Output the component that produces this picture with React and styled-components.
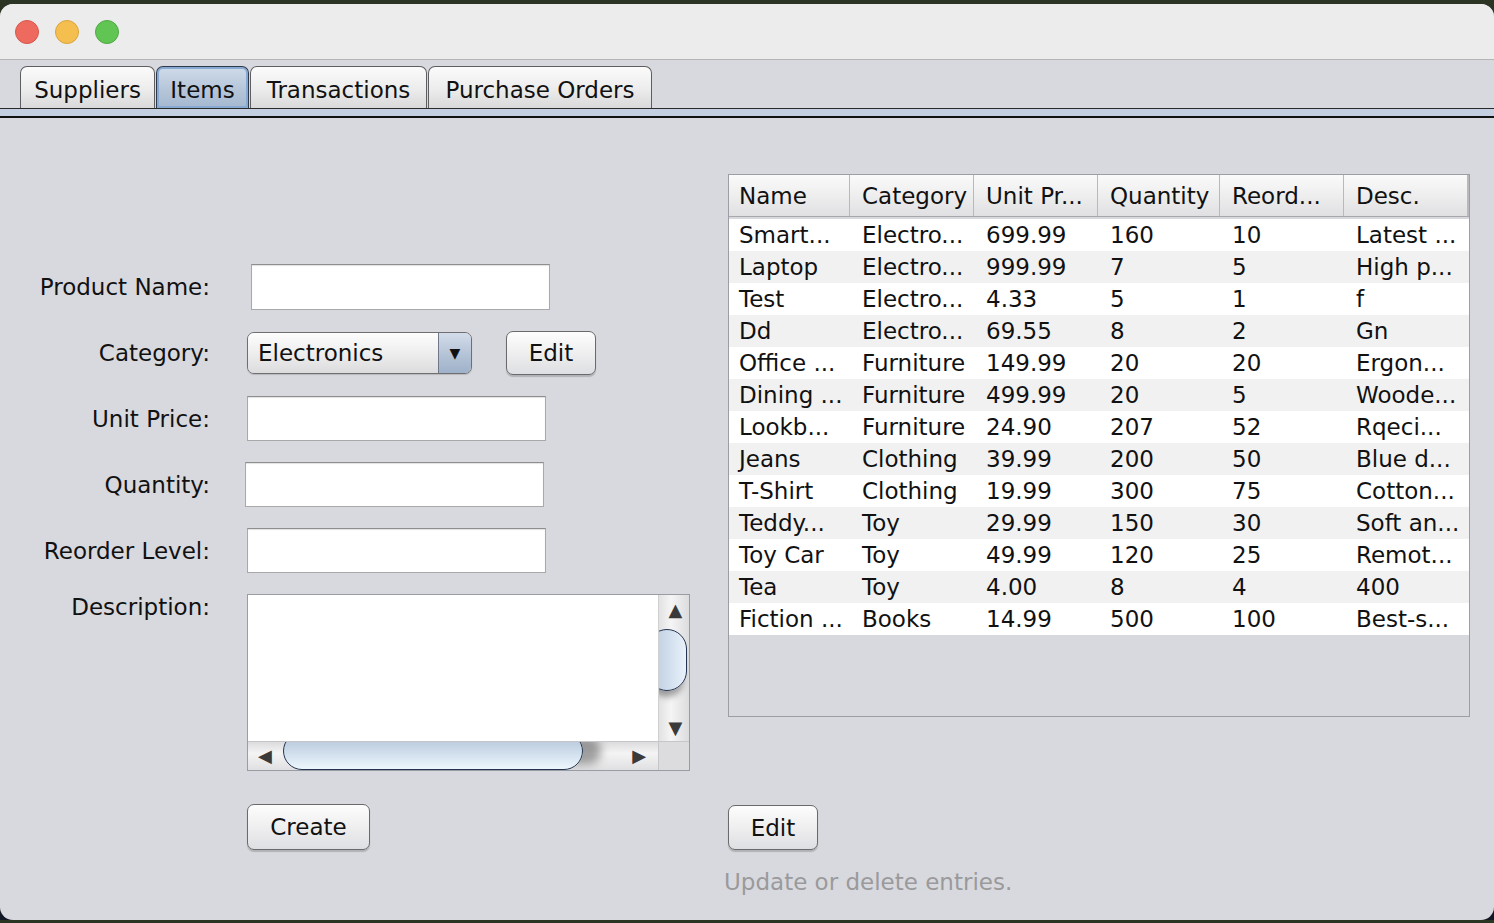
import React from "react";
import styled, { createGlobalStyle, css } from "styled-components";

const GlobalStyle = createGlobalStyle`
  html, body {
    margin: 0;
    padding: 0;
    background: linear-gradient(180deg, #2c3424 0%, #1b2117 50%, #121826 100%);
  }
  body {
    font-family: "DejaVu Sans", "Liberation Sans", sans-serif;
    font-size: 23px;
    color: #111;
  }
  * { box-sizing: border-box; }
`;

const Window = styled.div`
  margin-top: 4px;
  height: 916px;
  border-radius: 13px;
  overflow: hidden;
  background: #d8d9de;
  display: flex;
  flex-direction: column;
`;

const TitleBar = styled.div`
  height: 56px;
  flex: none;
  background: #ececec;
  border-bottom: 1px solid #b4b4b4;
  display: flex;
  align-items: center;
  gap: 16px;
  padding-left: 15px;
`;

const Light = styled.span`
  width: 24px;
  height: 24px;
  border-radius: 50%;
  background: ${(p) => p.color};
  border: 1px solid ${(p) => p.rim};
`;

const TabStrip = styled.div`
  height: 49px;
  flex: none;
  display: flex;
  align-items: flex-end;
  padding-left: 20px;
  border-bottom: 1px solid #2a2a2a;
`;

const Tab = styled.div`
  width: ${(p) => p.w}px;
  height: 42px;
  padding-top: 4px;
  margin-right: 1px;
  display: flex;
  align-items: center;
  justify-content: center;
  white-space: nowrap;
  border: 1.5px solid #5e5e60;
  border-bottom: none;
  border-radius: 7px 7px 0 0;
  background: linear-gradient(180deg, #fbfbfb 0%, #ececec 55%, #d9d9db 100%);
  ${(p) =>
    p.active &&
    css`
      border-color: #2d3a4e;
      background: linear-gradient(180deg, #cfdbe9 0%, #b3c4d8 60%, #a5b8cf 100%);
      box-shadow: inset 0 0 0 2px #88a9d2;
    `}
`;

const TabRule = styled.div`
  height: 9px;
  flex: none;
  background: #c4cfe2;
  border-bottom: 2px solid #111;
`;

const Content = styled.div`
  flex: 1;
  display: flex;
`;

const FormColumn = styled.div`
  width: 728px;
  flex: none;
  padding-top: 146px;
  display: flex;
  flex-direction: column;
  gap: 21px;
`;

const Row = styled.div`
  display: grid;
  grid-template-columns: 210px auto;
  column-gap: 37px;
  align-items: ${(p) => (p.top ? "start" : "center")};
  height: ${(p) => p.h}px;
  margin-top: ${(p) => p.extra || 0}px;
`;

const Label = styled.div`
  text-align: right;
  white-space: nowrap;
`;

const Field = styled.div`
  display: flex;
  align-items: center;
  gap: 34px;
  margin-left: ${(p) => p.shift || 0}px;
`;

const TextInput = styled.div`
  width: 299px;
  height: ${(p) => p.h || 45}px;
  background: #fff;
  border: 1px solid #a9a9a9;
  border-top-color: #8e8e8e;
  box-shadow: inset 0 1px 1px rgba(0, 0, 0, 0.12);
`;

const Combo = styled.div`
  width: 225px;
  height: 42px;
  display: flex;
  border: 1px solid #6f6f72;
  border-radius: 7px;
  overflow: hidden;
  box-shadow: 0 1px 1px rgba(0, 0, 0, 0.15);
`;

const ComboValue = styled.div`
  flex: 1;
  display: flex;
  align-items: center;
  padding-left: 10px;
  background: linear-gradient(180deg, #fdfdfd 0%, #eeeeef 50%, #dcdcde 100%);
`;

const ComboArrow = styled.div`
  width: 33px;
  display: flex;
  align-items: center;
  justify-content: center;
  border-left: 1px solid #6f7788;
  background: linear-gradient(180deg, #d3dcea 0%, #b4c3d6 55%, #9fb2ca 100%);
  font-size: 14px;
  color: #111;
`;

const Button = styled.div`
  width: ${(p) => p.w}px;
  height: ${(p) => p.h || 45}px;
  display: flex;
  align-items: center;
  justify-content: center;
  border: 1px solid #6a6a6c;
  border-radius: 7px;
  background: linear-gradient(180deg, #fdfdfd 0%, #f0f0f1 45%, #dedfe2 100%);
  box-shadow: 0 1.5px 1px rgba(0, 0, 0, 0.18);
`;

const TextArea = styled.div`
  width: 443px;
  height: 177px;
  border: 1px solid #9a9ca3;
  display: grid;
  grid-template-columns: 1fr 31px;
  grid-template-rows: 1fr 29px;
  background: #fff;
`;

const VScroll = styled.div`
  position: relative;
  overflow: hidden;
  border-left: 1px solid #d0d0d0;
  background: linear-gradient(90deg, #e2e2e3 0%, #f5f5f6 40%, #dcdcde 100%);
  display: flex;
  flex-direction: column;
  justify-content: space-between;
  align-items: center;
  padding: 6px 0 4px 3px;
`;

const HScroll = styled.div`
  position: relative;
  overflow: hidden;
  border-top: 1px solid #c6c6c8;
  background: linear-gradient(180deg, #dcdcde 0%, #f4f4f5 40%, #e0e0e2 100%);
  display: flex;
  justify-content: space-between;
  align-items: center;
  padding: 0 12px 0 10px;
`;

const Corner = styled.div`
  background: #dcdcde;
  border-top: 1px solid #c6c6c8;
  border-left: 1px solid #c6c6c8;
`;

const Arrow = styled.span`
  position: relative;
  z-index: 2;
  font-size: 18px;
  color: #3a3a3a;
  line-height: 1;
`;

const VThumb = styled.div`
  position: absolute;
  left: -12px;
  top: 34px;
  width: 40px;
  height: 62px;
  border-radius: 31px;
  border: 1.5px solid #243450;
  background: linear-gradient(90deg, #b7c8dc 0%, #d3e0ee 60%, #e9f2fb 100%);
  box-shadow: 0 10px 6px -4px rgba(0, 0, 0, 0.35);
`;

const HThumb = styled.div`
  position: absolute;
  left: 35px;
  top: -10px;
  width: 300px;
  height: 38px;
  border-radius: 19px;
  border: 1.5px solid #243450;
  background: linear-gradient(180deg, #aebfd4 0%, #cddbea 50%, #edf7fd 100%);
  box-shadow: 24px 0 10px -6px rgba(0, 0, 0, 0.35);
`;

const TableColumn = styled.div`
  flex: none;
  width: 742px;
  padding-top: 56px;
  display: flex;
  flex-direction: column;
`;

const Table = styled.div`
  height: 543px;
  border: 1.5px solid #9c9ea4;
  display: flex;
  flex-direction: column;
`;

const cols = "121px 124px 124px 122px 124px 1fr";

const Header = styled.div`
  height: 42px;
  flex: none;
  display: grid;
  grid-template-columns: ${cols};
  background: linear-gradient(180deg, #fafafa 0%, #eeeeef 50%, #e0e0e2 100%);
  border-bottom: 1px solid #a8a8aa;
  margin-bottom: 2px;
`;

const HeadCell = styled.div`
  display: flex;
  align-items: center;
  padding-left: ${(p) => (p.first ? 10 : 12)}px;
  border-right: 1px solid #b9b9bc;
  white-space: nowrap;
  &:last-child { border-right: 2px solid #b9b9bc; }
`;

const BodyRow = styled.div`
  height: 32px;
  display: grid;
  grid-template-columns: ${cols};
  align-items: center;
  background: ${(p) => (p.alt ? "#f1f1f2" : "#ffffff")};
`;

const Cell = styled.div`
  padding-left: ${(p) => (p.first ? 10 : 12)}px;
  white-space: nowrap;
  overflow: hidden;
`;

const TableFooter = styled.div`
  margin-top: 88px;
  display: flex;
  flex-direction: column;
`;

const Hint = styled.div`
  margin-top: 19px;
  margin-left: -4px;
  color: #9a9a9c;
`;

const headers = ["Name", "Category", "Unit Pr...", "Quantity", "Reord...", "Desc."];

const rows = [
  ["Smart...", "Electro...", "699.99", "160", "10", "Latest ..."],
  ["Laptop", "Electro...", "999.99", "7", "5", "High p..."],
  ["Test", "Electro...", "4.33", "5", "1", "f"],
  ["Dd", "Electro...", "69.55", "8", "2", "Gn"],
  ["Office ...", "Furniture", "149.99", "20", "20", "Ergon..."],
  ["Dining ...", "Furniture", "499.99", "20", "5", "Woode..."],
  ["Lookb...", "Furniture", "24.90", "207", "52", "Rqeci..."],
  ["Jeans", "Clothing", "39.99", "200", "50", "Blue d..."],
  ["T-Shirt", "Clothing", "19.99", "300", "75", "Cotton..."],
  ["Teddy...", "Toy", "29.99", "150", "30", "Soft an..."],
  ["Toy Car", "Toy", "49.99", "120", "25", "Remot..."],
  ["Tea", "Toy", "4.00", "8", "4", "400"],
  ["Fiction ...", "Books", "14.99", "500", "100", "Best-s..."],
];

const tabs = [
  { label: "Suppliers", w: 135 },
  { label: "Items", w: 93, active: true },
  { label: "Transactions", w: 177 },
  { label: "Purchase Orders", w: 224 },
];

const App = () => {
  return (
    <>
      <GlobalStyle />
      <Window>
        <TitleBar>
          <Light color="#ee6a5e" rim="#d5574b" />
          <Light color="#f5bf4f" rim="#d9a53a" />
          <Light color="#61c554" rim="#4fa943" />
        </TitleBar>
        <TabStrip>
          {tabs.map((t) => (
            <Tab key={t.label} w={t.w} active={t.active}>
              {t.label}
            </Tab>
          ))}
        </TabStrip>
        <TabRule />
        <Content>
          <FormColumn>
            <Row h={46}>
              <Label>Product Name:</Label>
              <Field shift={4}>
                <TextInput h={46} />
              </Field>
            </Row>
            <Row h={44}>
              <Label>Category:</Label>
              <Field>
                <Combo>
                  <ComboValue>Electronics</ComboValue>
                  <ComboArrow>▼</ComboArrow>
                </Combo>
                <Button w={90} h={44}>Edit</Button>
              </Field>
            </Row>
            <Row h={45}>
              <Label>Unit Price:</Label>
              <Field>
                <TextInput />
              </Field>
            </Row>
            <Row h={45}>
              <Label>Quantity:</Label>
              <Field shift={-2}>
                <TextInput />
              </Field>
            </Row>
            <Row h={45}>
              <Label>Reorder Level:</Label>
              <Field>
                <TextInput />
              </Field>
            </Row>
            <Row h={177} top>
              <Label>Description:</Label>
              <Field>
                <TextArea>
                  <div />
                  <VScroll>
                    <Arrow>▲</Arrow>
                    <VThumb />
                    <Arrow>▼</Arrow>
                  </VScroll>
                  <HScroll>
                    <Arrow>◀</Arrow>
                    <HThumb />
                    <Arrow>▶</Arrow>
                  </HScroll>
                  <Corner />
                </TextArea>
              </Field>
            </Row>
            <Row h={46} extra={12}>
              <div />
              <Field>
                <Button w={123} h={46}>Create</Button>
              </Field>
            </Row>
          </FormColumn>
          <TableColumn>
            <Table>
              <Header>
                {headers.map((h, i) => (
                  <HeadCell key={h} first={i === 0}>{h}</HeadCell>
                ))}
              </Header>
              {rows.map((r, ri) => (
                <BodyRow key={ri} alt={ri % 2 === 1}>
                  {r.map((c, ci) => (
                    <Cell key={ci} first={ci === 0}>{c}</Cell>
                  ))}
                </BodyRow>
              ))}
            </Table>
            <TableFooter>
              <Button w={90} h={45}>Edit</Button>
              <Hint>Update or delete entries.</Hint>
            </TableFooter>
          </TableColumn>
        </Content>
      </Window>
    </>
  );
};

export default App;
